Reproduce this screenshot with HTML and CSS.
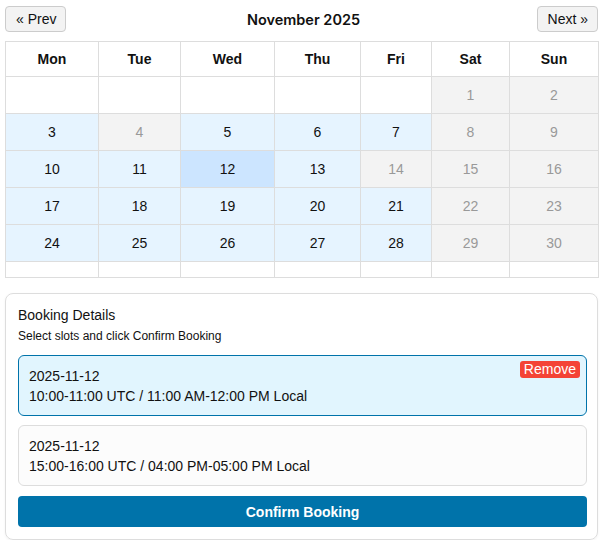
FILE: index.html
```html
<!DOCTYPE html>
<html lang="en">
<head>
  <meta charset="UTF-8" />
  <title>Book a Session</title>
  <meta name="viewport" content="width=device-width, initial-scale=1" />
  <link rel="stylesheet" href="styles.css">
</head>
<body>
  <div class="calendar-nav">
    <button class="nav-btn">&laquo; Prev</button>
    <h2 class="month-title">November 2025</h2>
    <button class="nav-btn">Next &raquo;</button>
  </div>

  <table class="calendar">
    <colgroup>
      <col style="width:93px"><col style="width:82px"><col style="width:94px"><col style="width:86px">
      <col style="width:71px"><col style="width:78px"><col style="width:89px">
    </colgroup>
    <thead>
      <tr><th>Mon</th><th>Tue</th><th>Wed</th><th>Thu</th><th>Fri</th><th>Sat</th><th>Sun</th></tr>
    </thead>
    <tbody>
      <tr>
        <td></td><td></td><td></td><td></td><td></td>
        <td class="off">1</td><td class="off">2</td>
      </tr>
      <tr>
        <td class="open">3</td><td class="off">4</td><td class="open">5</td><td class="open">6</td><td class="open">7</td>
        <td class="off">8</td><td class="off">9</td>
      </tr>
      <tr>
        <td class="open">10</td><td class="open">11</td><td class="open selected">12</td><td class="open">13</td><td class="off">14</td>
        <td class="off">15</td><td class="off">16</td>
      </tr>
      <tr>
        <td class="open">17</td><td class="open">18</td><td class="open">19</td><td class="open">20</td><td class="open">21</td>
        <td class="off">22</td><td class="off">23</td>
      </tr>
      <tr>
        <td class="open">24</td><td class="open">25</td><td class="open">26</td><td class="open">27</td><td class="open">28</td>
        <td class="off">29</td><td class="off">30</td>
      </tr>
      <tr class="filler">
        <td></td><td></td><td></td><td></td><td></td><td></td><td></td>
      </tr>
    </tbody>
  </table>

  <section class="booking-card">
    <h3>Booking Details</h3>
    <p class="hint">Select slots and click Confirm Booking</p>

    <div class="slot-list">
      <div class="slot active">
        <div>2025-11-12</div>
        <div>10:00-11:00 UTC / 11:00 AM-12:00 PM Local</div>
        <button class="remove-btn">Remove</button>
      </div>
      <div class="slot">
        <div>2025-11-12</div>
        <div>15:00-16:00 UTC / 04:00 PM-05:00 PM Local</div>
      </div>
    </div>

    <button class="confirm-btn">Confirm Booking</button>
  </section>
</body>
</html>
```

FILE: styles.css
```css
body {
  font-family: 'Liberation Sans', Arial, sans-serif;
  font-size: 14px;
  color: #111;
  background: #fff;
  margin: 0;
  padding: 6px 6px 0 5px;
}
.calendar-nav {
  display: flex;
  justify-content: space-between;
  align-items: center;
  height: 26px;
  margin-bottom: 9px;
}
.nav-btn {
  font-family: 'Liberation Sans', Arial, sans-serif;
  font-size: 14px;
  color: #111;
  background: #f3f3f3;
  border: 1px solid #ccc;
  border-radius: 4px;
  height: 26px;
  padding: 0 9px 0 10px;
  cursor: pointer;
}
.month-title {
  font-family: Inter, 'Noto Sans', sans-serif;
  font-size: 14.5px;
  font-weight: 600;
  margin: 0;
  padding-left: 4px;
}
table.calendar {
  width: 593px;
  border-collapse: collapse;
  table-layout: fixed;
}
.calendar th,
.calendar td {
  border: 1px solid #ddd;
  text-align: center;
  padding: 0;
}
.calendar th {
  height: 34px;
  font-weight: 700;
}
.calendar td {
  height: 36px;
}
.calendar tr.filler td {
  height: 15px;
}
.calendar td.open {
  background: #e6f4ff;
}
.calendar td.selected {
  background: #cce5ff;
}
.calendar td.off {
  background: #f3f3f3;
  color: #999;
}
.booking-card {
  margin-top: 15px;
  border: 1px solid #ddd;
  border-radius: 8px;
  padding: 12px 10px 12px 12px;
  box-shadow: 0 1px 3px rgba(0,0,0,0.05);
}
.booking-card h3 {
  font-size: 14px;
  font-weight: 400;
  line-height: 18px;
  margin: 0 0 4px;
}
.booking-card .hint {
  font-size: 12px;
  line-height: 16px;
  margin: 0 0 11px;
}
.slot-list {
  display: flex;
  flex-direction: column;
  gap: 9px;
}
.slot {
  position: relative;
  background: #fcfcfc;
  border: 1px solid #ddd;
  border-radius: 6px;
  padding: 10px 10px 9px;
  line-height: 20px;
}
.slot.active {
  background: #e1f5fe;
  border-color: #0073aa;
}
.remove-btn {
  position: absolute;
  top: 5px;
  right: 6px;
  font-family: 'Liberation Sans', Arial, sans-serif;
  font-size: 14px;
  line-height: 17px;
  color: #fff;
  background: #f44336;
  border: none;
  border-radius: 3px;
  padding: 0 4px;
  cursor: pointer;
}
.confirm-btn {
  display: block;
  width: 100%;
  margin-top: 10px;
  height: 31px;
  font-family: 'Liberation Sans', Arial, sans-serif;
  font-size: 14px;
  font-weight: 700;
  color: #fff;
  background: #0073aa;
  border: none;
  border-radius: 4px;
  cursor: pointer;
}
```
